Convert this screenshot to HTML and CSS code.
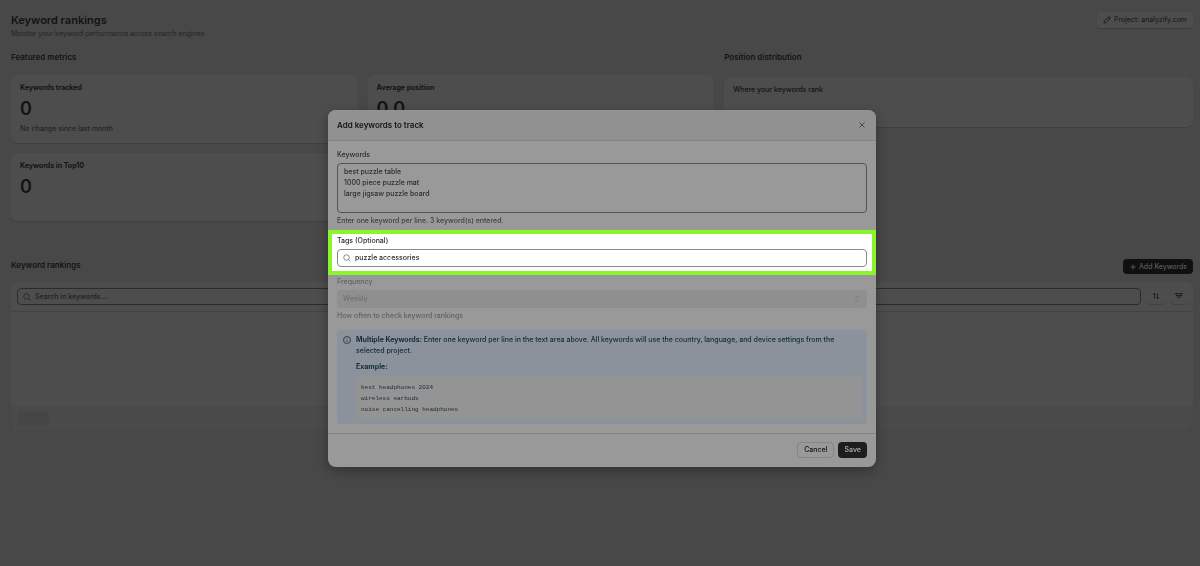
FILE: index.html
```html
<!DOCTYPE html>
<html lang="en">
  <head>
    <meta charset="UTF-8" />
    <meta name="viewport" content="width=device-width, initial-scale=1.0" />
    <title>Keyword rankings</title>
    <link rel="stylesheet" href="styles.css">
  </head>
  <body>
    <main class="page">
      <header class="page-header">
        <div>
          <h1>Keyword rankings</h1>
          <p class="subtitle">Monitor your keyword performance across search engines</p>
        </div>
        <button class="btn-project" type="button">
          <svg class="icon" viewBox="0 0 16 16"><path d="M2 14l.7-4.100 8-8a1.8 1.8 0 0 1 3.400 3.400l-8 8zM9.500 3.500l3 3" /></svg>
          Project: analyzify.com
        </button>
      </header>

      <div class="overview">
        <section>
          <h2>Featured metrics</h2>
          <div class="metrics">
            <div class="card metric">
              <h3>Keywords tracked</h3>
              <p class="value">0</p>
              <p class="note">No change since last month</p>
            </div>
            <div class="card metric">
              <h3>Average position</h3>
              <p class="value">0.0</p>
            </div>
            <div class="card metric">
              <h3>Keywords in Top10</h3>
              <p class="value">0</p>
            </div>
          </div>
        </section>
        <section>
          <h2>Position distribution</h2>
          <div class="card distribution">
            <p>Where your keywords rank</p>
          </div>
        </section>
      </div>

      <section>
        <div class="list-header">
          <h2>Keyword rankings</h2>
          <button class="btn-add" type="button">
            <svg class="icon" viewBox="0 0 16 16"><path d="M8 3v10M3 8h10" /></svg>
            Add Keywords
          </button>
        </div>
        <div class="card list">
          <div class="toolbar">
            <div class="search-box">
              <svg class="icon" viewBox="0 0 16 16"><circle cx="7" cy="7" r="5.500" /><path d="M11 11l4 4" /></svg>
              <input type="text" placeholder="Search in keywords..." aria-label="Search in keywords" />
            </div>
            <button class="btn-icon" type="button" aria-label="Sort">
              <svg class="icon" viewBox="0 0 16 16"><path d="M5 13V2.500M2 5.500l3-3 3 3M11 3v10.500M8 10.500l3 3 3-3" /></svg>
            </button>
            <button class="btn-icon" type="button" aria-label="Filter">
              <svg class="icon" viewBox="0 0 16 16"><path d="M1 3h14M3 7h10M6 11h4M1 3l5 8M15 3l-5 8" /></svg>
            </button>
          </div>
          <div class="list-body"></div>
          <div class="list-footer">
            <div class="pager">
              <button type="button" aria-label="Previous" disabled><svg class="icon" viewBox="0 0 16 16"><path d="M10 3L5 8l5 5" /></svg></button>
              <button type="button" aria-label="Next" disabled><svg class="icon" viewBox="0 0 16 16"><path d="M6 3l5 5-5 5" /></svg></button>
            </div>
          </div>
        </div>
      </section>
    </main>

    <div class="overlay">
      <form class="modal" role="dialog" aria-labelledby="modal-title">
        <div class="modal-header">
          <h2 id="modal-title">Add keywords to track</h2>
          <button class="btn-close" type="button" aria-label="Close">
            <svg class="icon" viewBox="0 0 16 16"><path d="M3 3l10 10M13 3L3 13" /></svg>
          </button>
        </div>

        <div class="field first">
          <label for="keywords">Keywords</label>
          <textarea id="keywords">best puzzle table
1000 piece puzzle mat
large jigsaw puzzle board</textarea>
          <p class="help">Enter one keyword per line. 3 keyword(s) entered.</p>
        </div>

        <div class="field highlight">
          <label for="tags">Tags (Optional)</label>
          <div class="tag-box">
            <svg class="icon" viewBox="0 0 16 16"><circle cx="7" cy="7" r="5.500" /><path d="M11 11l4 4" /></svg>
            <input type="text" id="tags" value="puzzle accessories" />
          </div>
        </div>

        <div class="field disabled">
          <label for="frequency">Frequency</label>
          <div class="select-box">
            <select id="frequency" disabled>
              <option>Weekly</option>
            </select>
            <svg class="icon" viewBox="0 0 16 16"><path d="M4.500 6L8 2.500 11.500 6M4.500 10L8 13.500 11.500 10" /></svg>
          </div>
          <p class="help">How often to check keyword rankings</p>
        </div>

        <div class="banner">
          <svg class="icon" viewBox="0 0 16 16"><circle cx="8" cy="8" r="7" /><path d="M8 7.500v4M8 4.500v1" /></svg>
          <div class="banner-text">
            <p><strong>Multiple Keywords:</strong> Enter one keyword per line in the text area above. All keywords will use the country, language, and device settings from the selected project.</p>
            <p class="example"><strong>Example:</strong></p>
            <pre>best headphones 2024
wireless earbuds
noise cancelling headphones</pre>
          </div>
        </div>

        <div class="modal-footer">
          <button class="btn-cancel" type="button">Cancel</button>
          <button class="btn-save" type="button">Save</button>
        </div>
      </form>
    </div>
  </body>
</html>
```
FILE: styles.css
```css
* {
  margin: 0;
  padding: 0;
  box-sizing: border-box;
}

body {
  font-family: Inter, sans-serif;
  font-size: 7px;
  line-height: 12px;
  color: #131313;
  background-color: #484848;
}

button,
input,
select,
textarea {
  font: inherit;
  color: inherit;
  border: none;
  background: none;
  outline: none;
}

button {
  display: flex;
  align-items: center;
  justify-content: center;
}

.icon {
  width: 8px;
  height: 8px;
  flex: none;
  fill: none;
  stroke: currentColor;
  stroke-width: 1.5px;
}

h2,
h3 {
  font-size: 8px;
  font-weight: 600;
}

h3 {
  font-size: 7px;
  font-weight: 700;
}

/* Page */
.page {
  padding: 12px 7px 0 11px;
}

.page-header {
  display: flex;
  justify-content: space-between;
  align-items: flex-start;
  height: 39px;
}

h1 {
  font-size: 11px;
  font-weight: 600;
  line-height: 16px;
}

.subtitle,
.note {
  color: #242424;
}

.btn-project {
  height: 16px;
  padding: 0 6px;
  gap: 3px;
  border-radius: 4px;
  background-color: #4d4d4d;
  box-shadow: 0 1px 0 #3c3c3c;
}

.card {
  border-radius: 6px;
  background-color: #4d4d4d;
  box-shadow: 0 1px 1px #404040;
}

.overview {
  display: grid;
  grid-template-columns: 3fr 2fr;
  gap: 10px;
  min-height: 208px;
}

.metrics {
  display: grid;
  grid-template-columns: 1fr 1fr;
  gap: 10px;
  margin-top: 12px;
}

.metric {
  height: 68px;
  padding: 7px 9px;
}

.value {
  margin-top: 4px;
  font-size: 18px;
  font-weight: 600;
  line-height: 22px;
}

.note {
  margin-top: 3px;
  font-weight: 500;
}

.distribution {
  height: 50px;
  margin-top: 14px;
  padding: 7px 9px;
  font-weight: 500;
}

.list-header {
  display: flex;
  justify-content: space-between;
  height: 23px;
}

.btn-add {
  height: 15px;
  padding: 0 6px;
  gap: 2px;
  border-radius: 4px;
  background-color: #101010;
  color: #686868;
}

.toolbar {
  display: flex;
  gap: 7px;
  padding: 6px;
  border-bottom: 1px solid #434343;
}

.search-box {
  display: flex;
  flex: 1;
  align-items: center;
  gap: 4px;
  height: 17px;
  padding: 0 5px;
  border: 1px solid #2b2b2b;
  border-radius: 4px;
  color: #202020;
  font-weight: 500;
}

.search-box input {
  flex: 1;
}

.search-box input::placeholder {
  color: #202020;
}

.btn-icon {
  width: 16px;
  height: 16px;
  border-radius: 4px;
  box-shadow: 0 1px 0 #404040;
}

.list-body {
  height: 94px;
}

.list-footer {
  padding: 5px 6px;
  border-radius: 0 0 6px 6px;
  background-color: #4a4a4a;
}

.pager {
  display: flex;
  width: 32px;
  border-radius: 4px;
  background-color: #464646;
}

.pager button {
  flex: 1;
  height: 14px;
  color: #3f3f3f;
}

/* Modal */
.overlay {
  position: fixed;
  inset: 0;
  display: flex;
  justify-content: center;
  align-items: flex-start;
  padding: 110px 0 0 4px;
}

.modal {
  width: 548px;
  overflow: hidden;
  border-radius: 8px;
  background-color: #999;
  box-shadow: 0 4px 12px rgba(0, 0, 0, 0.3);
  font-weight: 500;
}

.modal-header {
  display: flex;
  justify-content: space-between;
  align-items: center;
  height: 31px;
  padding: 0 9px;
  border-bottom: 1px solid #838383;
  background-color: #919191;
}

.btn-close {
  width: 10px;
  height: 12px;
  color: #333;
}

.field {
  padding: 1px 9px 0;
  color: #2b2b2b;
}

.field.first {
  padding-top: 8px;
}

.field label {
  display: block;
  margin-bottom: 2px;
}

.field textarea {
  display: block;
  width: 100%;
  height: 50px;
  padding: 2px 6px;
  border: 1px solid #555;
  border-radius: 4px;
  line-height: 11px;
  resize: none;
}

.help {
  margin-top: 2px;
  color: #3f3f3f;
}

.field.highlight {
  margin-top: 3px;
  padding: 1px 5px 4px;
  border: 4px solid #8af52a;
  background-color: #fff;
}

.tag-box {
  display: flex;
  align-items: center;
  gap: 4px;
  height: 18px;
  padding: 0 5px;
  border: 1px solid #8a8a8a;
  border-radius: 4px;
}

.tag-box .icon {
  color: #666;
}

.tag-box input {
  flex: 1;
}

.field.disabled,
.disabled .help {
  color: #626262;
}

.select-box {
  display: flex;
  align-items: center;
  height: 18px;
  padding: 0 6px;
  border-radius: 4px;
  background-color: #8f8f8f;
}

.select-box select {
  flex: 1;
  appearance: none;
  color: #707070;
  opacity: 1;
}

.select-box .icon {
  color: #777;
}

.banner {
  display: flex;
  gap: 5px;
  margin: 8px 9px 9px;
  padding: 4px 5px 5px 6px;
  border-radius: 4px;
  background-color: #8b929b;
  color: #122b38;
  line-height: 11px;
}

.banner > .icon {
  margin-top: 2px;
}

.banner-text {
  flex: 1;
}

.banner strong {
  font-weight: 700;
}

.example {
  margin: 5px 0;
}

pre {
  padding: 5px 5px 4px;
  border-radius: 3px;
  background-color: #959494;
  font-family: "Liberation Mono", monospace;
  font-size: 6px;
}

.modal-footer {
  display: flex;
  justify-content: flex-end;
  gap: 4px;
  padding: 8px 9px 9px;
  border-top: 1px solid #838383;
}

.btn-cancel,
.btn-save {
  height: 16px;
  padding: 0 6px;
  border-radius: 4px;
}

.btn-cancel {
  border: 1px solid #868686;
}

.btn-save {
  background-color: #1d1d1d;
  color: #a0a0a0;
  font-weight: 600;
}
```
